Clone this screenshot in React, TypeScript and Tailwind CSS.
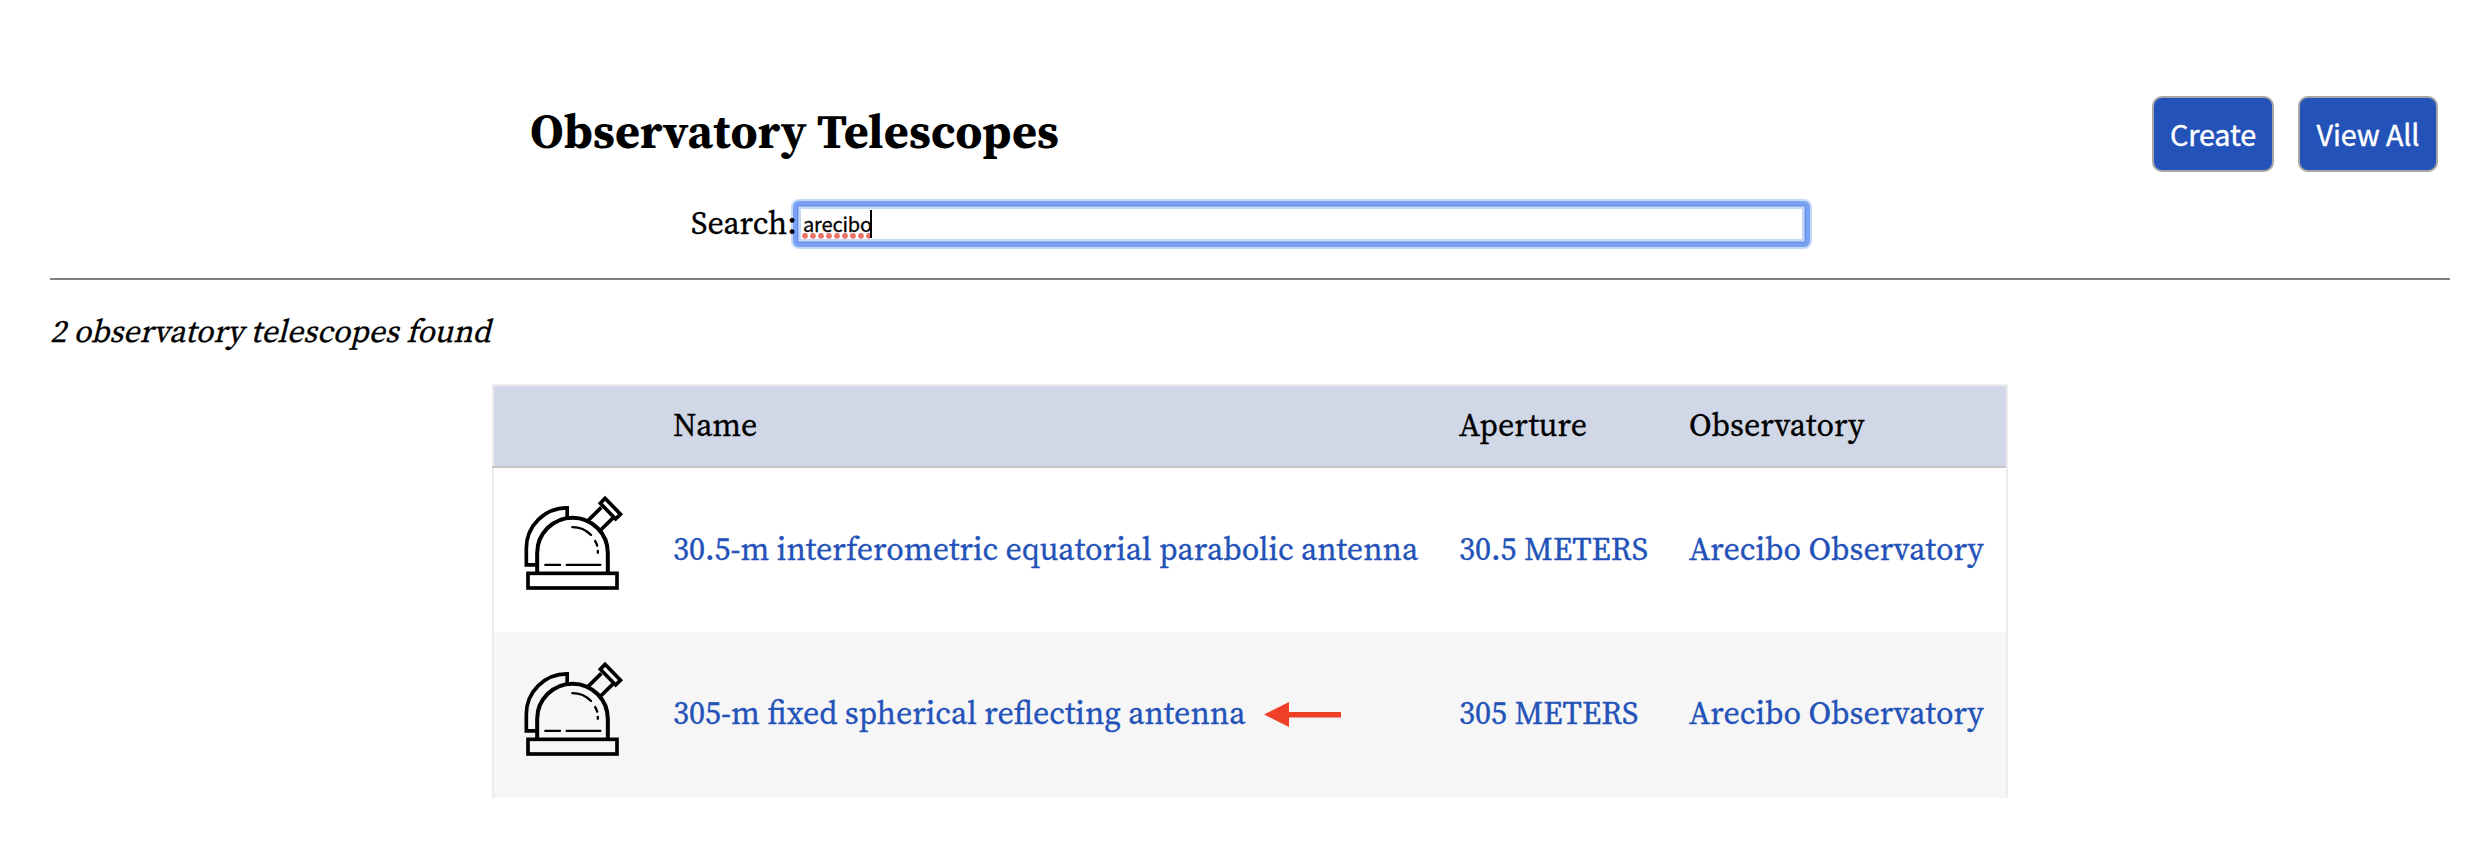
import React from "react";

type Telescope = { name: string; aperture: string; observatory: string; marked?: boolean };

const telescopes: Telescope[] = [
  {
    name: "30.5-m interferometric equatorial parabolic antenna",
    aperture: "30.5 METERS",
    observatory: "Arecibo Observatory",
  },
  {
    name: "305-m fixed spherical reflecting antenna",
    aperture: "305 METERS",
    observatory: "Arecibo Observatory",
    marked: true,
  },
];

function DomeIcon() {
  return (
    <svg width="140" height="130" viewBox="0 0 420 390" fill="none" stroke="#000" className="block">
      <g strokeWidth="11">
        <path d="M111 254.5H79V205A122 121.500 0 0 1 201.500 83.500V112" />
        <path d="M264 122L304 82M299 153L340 113" />
        <path d="M315 55L361.500 102.500L347 117L301 70Z" />
        <rect x="84" y="280" width="267" height="44" />
      </g>
      <path strokeWidth="12" d="M111.500 279V219A106 106 0 0 1 323.500 219V279" />
      <g strokeWidth="7" strokeLinecap="round">
        <path d="M136 254.500H180M200 254.500H301" />
        <path d="M217 141.500A78 78 0 0 1 273 165M285.500 183A78 78 0 0 1 291.500 197M293.500 213V218" />
      </g>
    </svg>
  );
}

function RedArrow() {
  return (
    <svg width="77" height="26" viewBox="0 0 77 26" className="ml-[19px] mt-[9px] block shrink-0" fill="#ee4026">
      <path d="M0 12.500L25 0V10H77V15.500H25V25Z" />
    </svg>
  );
}

function SearchField() {
  return (
    <div className="-ml-[6px] w-[1021px] rounded-[8px] bg-[#c6d9fa] p-[2px]">
      <div className="rounded-[6px] bg-[#7ba2f4] p-[4px]">
        <div className="bg-[#658fe5] p-px">
          <div className="bg-[#9dbaf2] p-px">
            <div className="bg-[#c6d8f8] p-[2px]">
              <div className="relative flex h-[30px] items-center bg-white pl-[2px]">
                <span className="font-['Noto_Sans_CJK_JP',sans-serif] text-[20px] leading-[30px] tracking-[-0.15px] text-black">
                  arecibo
                </span>
                <svg width="68" height="6" viewBox="0 0 68 6" className="absolute left-px top-[24px]" fill="#ec7266">
                  {[0, 1, 2, 3, 4, 5, 6, 7, 8].map((i) => (
                    <circle key={i} cx={3 + i * 8} cy="2.8" r="2.9" />
                  ))}
                </svg>
                <div className="absolute left-[69px] top-px h-[28px] w-[2px] bg-black" />
              </div>
            </div>
          </div>
        </div>
      </div>
    </div>
  );
}

function ActionButton({ className, children }: { className: string; children: React.ReactNode }) {
  return (
    <button
      className={
        "flex h-[76px] items-center justify-center whitespace-nowrap rounded-[10px] border-2 border-[#a6a6a6] bg-[#2352b9] font-['Noto_Sans_CJK_JP',sans-serif] text-[28.8px] leading-[42px] tracking-[-0.15px] text-white [-webkit-text-stroke:0.4px] " +
        className
      }
    >
      {children}
    </button>
  );
}

export default function App() {
  return (
    <div className="h-[860px] w-[2486px] overflow-hidden bg-white px-[50px] pt-[96px] font-['Source_Serif_4','Liberation_Serif',serif] text-[32px] leading-[40px] text-black [-webkit-text-stroke:0.3px] [font-optical-sizing:none]">
      <header className="flex h-[103px] items-start justify-between pl-[480px]">
        <h1 className="pt-[5px] text-[48px] font-bold leading-[60px] tracking-[0.15px] [-webkit-text-stroke:0px]">
          Observatory Telescopes
        </h1>
        <div className="-mr-[2px] flex gap-6">
          <ActionButton className="w-[122px]">Create</ActionButton>
          <ActionButton className="w-[140px]">View All</ActionButton>
        </div>
      </header>

      <div className="flex h-[50px] pl-[641px]">
        <label className="relative z-10 w-[106px] pt-[4px]">Search:</label>
        <SearchField />
      </div>

      <hr className="mt-[29px] w-[2400px] border-t-2 border-[#808080]" />

      <p className="mt-[31px] origin-[0_31px] -skew-x-[14deg]">2 observatory telescopes found</p>

      <section className="ml-[442px] mt-[33px] w-[1516px] border-x-2 border-t-2 border-[#ececec]">
        <div className="grid h-[80px] grid-cols-[179px_786px_230px_1fr] bg-[#d0d7e6] pt-[19px]">
          <span />
          <span>Name</span>
          <span>Aperture</span>
          <span>Observatory</span>
        </div>
        <div className="-ml-[2px] h-[2px] bg-[#c5c5c5]" />
        {telescopes.map((t, i) => (
          <div
            key={t.name}
            className={
              "grid grid-cols-[179px_786px_230px_1fr] text-[#2352b9] " +
              (i === 0 ? "h-[164px] bg-white" : "h-[166px] bg-[#f6f6f6]")
            }
          >
            <div className={i === 0 ? "pl-[6px] pt-[12px]" : "pl-[6px] pt-[14px]"}>
              <DomeIcon />
            </div>
            <div className="flex items-start whitespace-nowrap pt-[61px]">
              <span>{t.name}</span>
              {t.marked && <RedArrow />}
            </div>
            <span className="pt-[61px]">{t.aperture}</span>
            <span className="pt-[61px]">{t.observatory}</span>
          </div>
        ))}
      </section>
    </div>
  );
}
